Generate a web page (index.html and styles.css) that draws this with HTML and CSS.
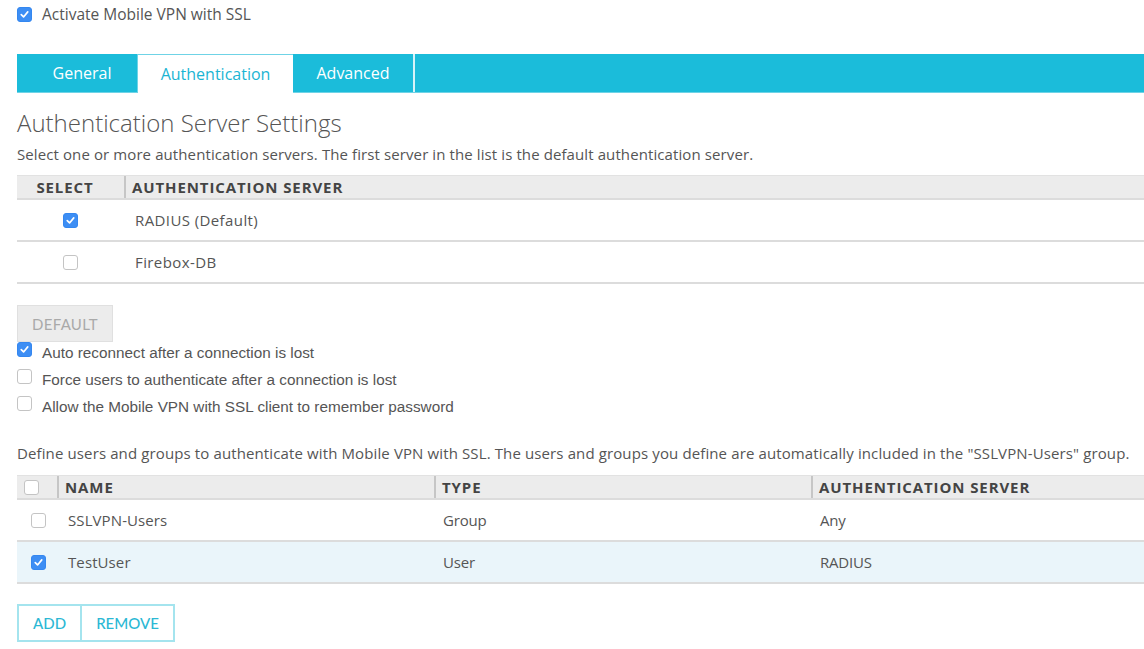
FILE: index.html
```html
<!DOCTYPE html>
<html>
<head>
<meta charset="utf-8">
<link rel="stylesheet" href="styles.css">
</head>
<body>
<div class="page">
  <label class="chk-row top">
    <span class="cb on"><svg viewBox="0 0 14 14"><path d="M3.5 7.2 L6 9.6 L10.5 4.2"/></svg></span>
    <span class="top-label">Activate Mobile VPN with SSL</span>
  </label>

  <div class="tabs">
    <div class="tab first">General</div>
    <div class="tab active">Authentication</div>
    <div class="tab last">Advanced</div>
  </div>

  <h2 class="heading">Authentication Server Settings</h2>
  <p class="desc first">Select one or more authentication servers. The first server in the list is the default authentication server.</p>

  <div class="grid servers">
    <div class="row head">
      <div class="cell c-select">SELECT</div>
      <div class="cell sep">AUTHENTICATION SERVER</div>
    </div>
    <div class="row">
      <div class="cell c-select center"><span class="cb on"><svg viewBox="0 0 14 14"><path d="M3.5 7.2 L6 9.6 L10.5 4.2"/></svg></span></div>
      <div class="cell val">RADIUS (Default)</div>
    </div>
    <div class="row">
      <div class="cell c-select center"><span class="cb"></span></div>
      <div class="cell val">Firebox-DB</div>
    </div>
  </div>

  <button class="btn-default">DEFAULT</button>

  <div class="opts">
    <label class="chk-row opt">
      <span class="cb on"><svg viewBox="0 0 14 14"><path d="M3.5 7.2 L6 9.6 L10.5 4.2"/></svg></span>
      <span class="opt-label">Auto reconnect after a connection is lost</span>
    </label>
    <label class="chk-row opt">
      <span class="cb"></span>
      <span class="opt-label">Force users to authenticate after a connection is lost</span>
    </label>
    <label class="chk-row opt">
      <span class="cb"></span>
      <span class="opt-label">Allow the Mobile VPN with SSL client to remember password</span>
    </label>
  </div>

  <p class="desc second">Define users and groups to authenticate with Mobile VPN with SSL. The users and groups you define are automatically included in the "SSLVPN-Users" group.</p>

  <div class="grid users">
    <div class="row head">
      <div class="cell c-chk"><span class="cb"></span></div>
      <div class="cell sep">NAME</div>
      <div class="cell sep">TYPE</div>
      <div class="cell sep">AUTHENTICATION SERVER</div>
    </div>
    <div class="row">
      <div class="cell c-chk body"><span class="cb"></span></div>
      <div class="cell val">SSLVPN-Users</div>
      <div class="cell val t2">Group</div>
      <div class="cell val t2">Any</div>
    </div>
    <div class="row selected">
      <div class="cell c-chk body"><span class="cb on"><svg viewBox="0 0 14 14"><path d="M3.5 7.2 L6 9.6 L10.5 4.2"/></svg></span></div>
      <div class="cell val">TestUser</div>
      <div class="cell val t2">User</div>
      <div class="cell val t2">RADIUS</div>
    </div>
  </div>

  <div class="btn-group">
    <button class="btn-out">ADD</button>
    <button class="btn-out">REMOVE</button>
  </div>
</div>
</body>
</html>
```

FILE: styles.css
```css
* { box-sizing: border-box; }
html, body { margin: 0; padding: 0; background: #fff; }
body {
  font-family: "Open Sans", "Liberation Sans", sans-serif;
  color: #555;
  overflow: hidden;
}
.page { padding: 0 0 0 17px; width: 1144px; }

.cb {
  display: inline-flex;
  width: 15px;
  height: 15px;
  border: 1px solid #c4c4c4;
  border-radius: 3px;
  background: #fff;
  flex: none;
  align-items: center;
  justify-content: center;
}
.cb.on {
  background: #3d8ef4;
  border-color: #3487f0;
}
.cb svg { width: 13px; height: 13px; }
.cb svg path { fill: none; stroke: #fff; stroke-width: 1.8; stroke-linecap: round; stroke-linejoin: round; }

.chk-row { display: flex; align-items: center; gap: 10px; }
.top { height: 28px; padding-top: 0; }
.top-label { font-size: 15.5px; color: #555; }

.tabs {
  margin-top: 26px;
  height: 39px;
  background: #1bbcda;
  display: flex;
  border-bottom: 1px solid #6fd3e6;
}
.tab {
  color: #fff;
  font-size: 16px;
  display: flex;
  align-items: center;
  justify-content: center;
  height: 38px;
}
.tab.first { width: 120px; padding-left: 10px; }
.tab.active {
  width: 156px;
  background: #fff;
  color: #1bb5d3;
  border-left: 1px solid #6fd3e6;
  border-top: 1px solid #6fd3e6;
  height: 39px;
  padding-top: 0;
}
.tab.last { width: 122px; border-right: 2px solid #d6f3f8; }

.heading {
  margin: 14px 0 0;
  font-weight: 300;
  font-size: 24px;
  color: #555;
  line-height: 32px;
  letter-spacing: 0;
}
.desc {
  margin: 0;
  font-size: 15px;
  color: #555;
  letter-spacing: 0.1px;
}
.desc.first { margin-top: 4px; line-height: 22px; }
.desc.second { margin-top: 22px; line-height: 22px; letter-spacing: 0.12px; }

.grid { width: 1127px; }
.servers { margin-top: 10px; }
.row { display: flex; border-bottom: 2px solid #dcdcdc; height: 42px; }
.row.head {
  background: #ececec;
  height: 25px;
  border-top: 1px solid #e2e2e2;
}
.row.selected { background: #eaf5fa; }
.cell {
  display: flex;
  align-items: center;
  font-size: 15px;
  color: #555;
}
.head .cell {
  font-weight: 700;
  font-size: 15px;
  letter-spacing: 0.9px;
  color: #444;
}
.head .cell.sep { border-left: 2px solid #c6c6c6; padding-left: 6px; }
.servers .c-select { width: 107px; justify-content: center; }
.servers .head .c-select { padding-right: 11px; }
.servers .val { padding-left: 11px; letter-spacing: 0.4px; }
.servers .row.head .cell:nth-child(2) { flex: 1; }

.btn-default {
  margin-top: 21px;
  width: 96px;
  height: 37px;
  background: #ececec;
  border: 1px solid #e0e0e0;
  color: #a9a9a9;
  font-family: "Lato", "Open Sans", sans-serif;
  font-size: 15px;
  letter-spacing: 0.3px;
  display: block;
}

.opts { display: flex; flex-direction: column; margin-top: -3px; }
.opt { height: 27px; align-items: center; }
.opt .cb { margin-top: -6px; }
.opt-label {
  font-family: "Liberation Sans", Arial, sans-serif;
  font-size: 15.3px;
  color: #555;
}

.users { margin-top: 11px; }
.users .c-chk { width: 40px; padding-left: 7px; }
.users .c-chk.body { padding-left: 14px; }
.users .cell:nth-child(2) { width: 377px; }
.users .cell:nth-child(3) { width: 377px; }
.users .cell:nth-child(4) { flex: 1; }
.users .val { padding-left: 11px; letter-spacing: 0.1px; }
.users .val.t2 { padding-left: 9px; letter-spacing: -0.2px; }

.btn-group { display: flex; margin-top: 20px; }
.btn-out {
  height: 38px;
  background: #fff;
  border: 2px solid #a4e4ee;
  color: #2cb8d4;
  font-family: "Lato", "Open Sans", sans-serif;
  font-size: 15px;
  font-weight: 500;
  padding: 0 14px;
}
.btn-out:first-child { width: 65px; }
.btn-out + .btn-out { border-left: none; width: 93px; }
```
